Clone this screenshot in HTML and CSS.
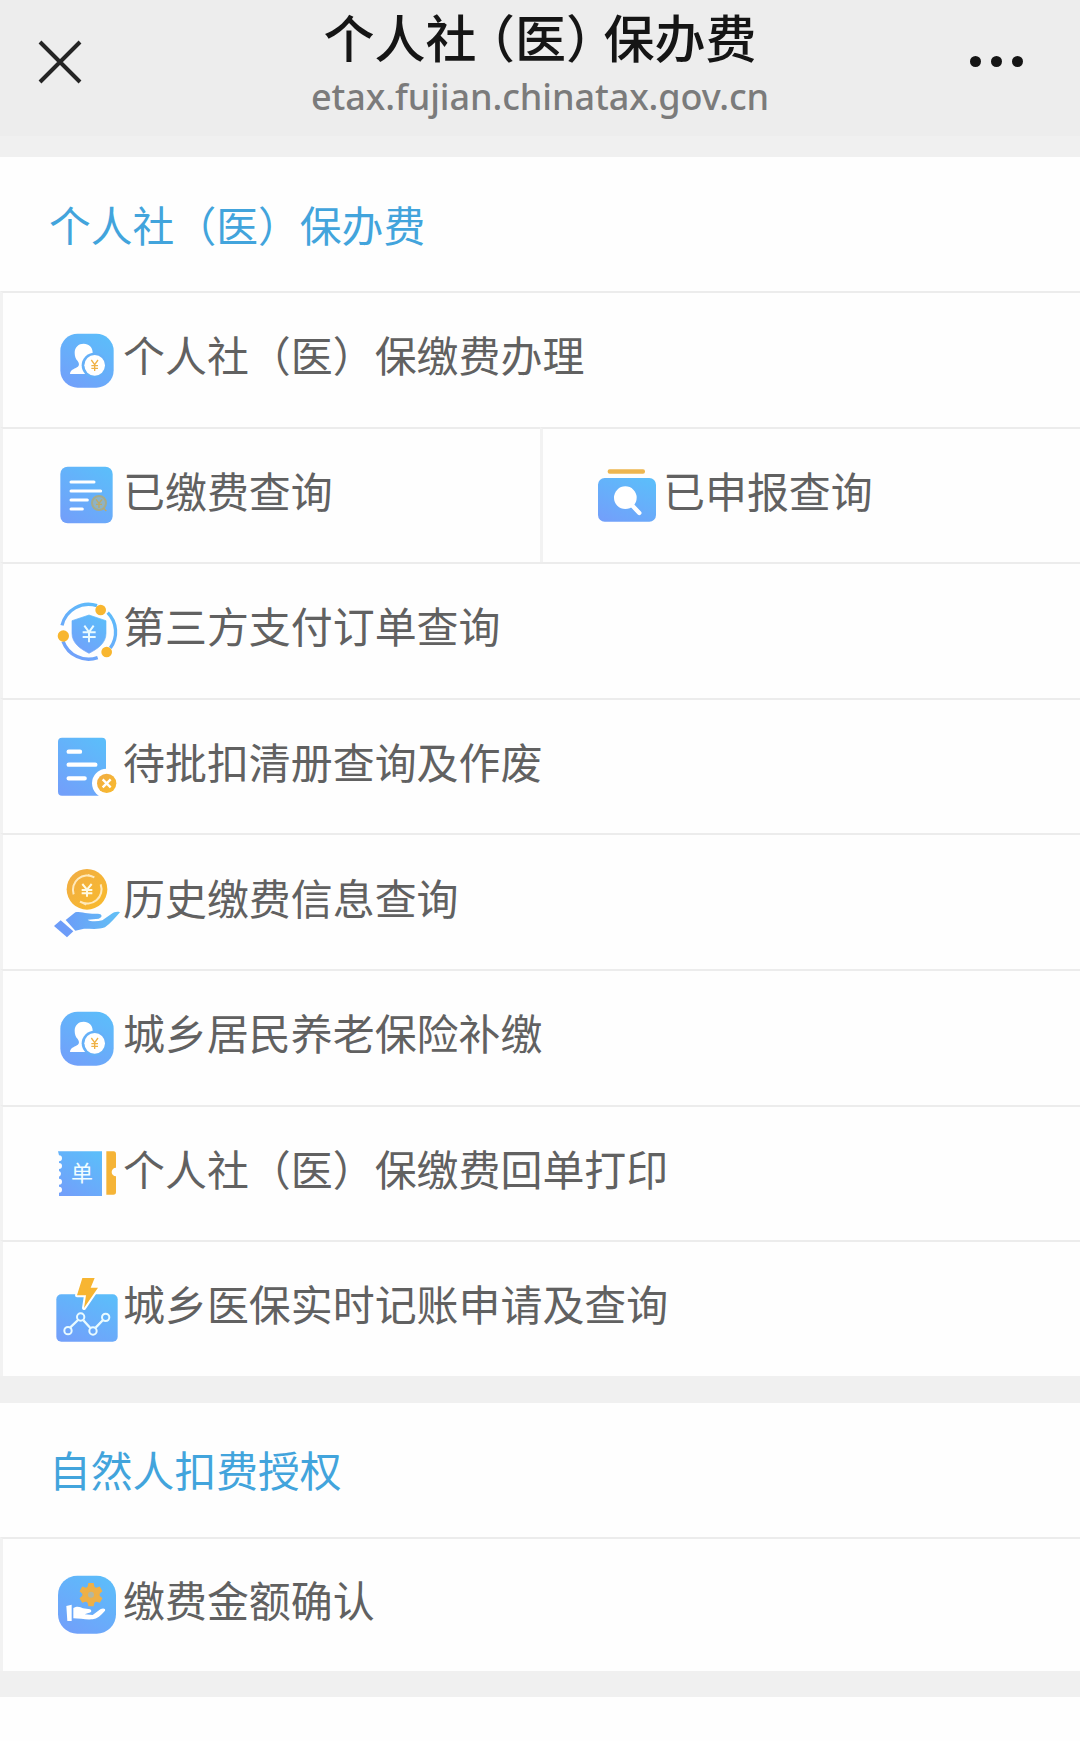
FILE: index.html
```html
<!DOCTYPE html>
<html lang="zh-CN">
<head>
<meta charset="utf-8">
<title>个人社（医）保办费</title>
<link rel="stylesheet" href="styles.css">
</head>
<body>
<svg class="defs" width="0" height="0" aria-hidden="true">
  <defs>
    <linearGradient id="blue" x1="0.8" y1="0" x2="0.2" y2="1">
      <stop offset="0" stop-color="#5cbdfa"/><stop offset="1" stop-color="#72a0fa"/>
    </linearGradient>
    <linearGradient id="gold" x1="0" y1="0" x2="1" y2="1">
      <stop offset="0" stop-color="#f0ac45"/><stop offset="1" stop-color="#f9bb2c"/>
    </linearGradient>
    <linearGradient id="palm" x1="0" y1="0" x2="1" y2="0">
      <stop offset="0" stop-color="#6b9df8"/><stop offset="1" stop-color="#62c0f5"/>
    </linearGradient>
    <symbol id="person" viewBox="42 42 198 216">
      <rect x="61" y="71" width="160" height="162" rx="52" fill="url(#blue)"/>
      <path d="M90 192C91 180 101 178 111 172C119 168 118 160 113 153C107 147 104 139 104 128C104 111 116 101 131 101C147 101 158 112 158 128C158 143 152 150 146 157V192Z" fill="#fff"/>
      <circle cx="163" cy="166" r="38" fill="#65b0f8"/>
      <circle cx="164" cy="166" r="31" fill="#fff"/>
      <path d="M154 150L164 164L174 150M164 164V183M154 167H174M154 175H174" fill="none" stroke="#efb145" stroke-width="4"/>
    </symbol>
  </defs>
</svg>

<header class="topbar">
  <svg class="close" viewBox="0 0 44 44"><path d="M2 2L42 42M42 2L2 42"/></svg>
  <div class="heading">
    <h1 class="title">个人社<span class="open">（</span>医<span class="shut">）</span>保办费</h1>
    <div class="domain">etax.fujian.chinatax.gov.cn</div>
  </div>
  <div class="more"><i></i><i></i><i></i></div>
</header>

<main>
  <section class="group">
    <h2 class="group-title">个人社（医）保办费</h2>
    <a class="item"><svg class="icon"><use href="#person"/></svg><span>个人社（医）保缴费办理</span></a>
    <div class="pair">
      <a class="item">
        <svg class="icon" viewBox="42 448 198 216">
          <rect x="61" y="471" width="157" height="170" rx="22" fill="url(#blue)"/>
          <path d="M93 517H162M93 544H182M93 571H142M93 598H127" stroke="#fff" stroke-width="9" stroke-linecap="round"/>
          <circle cx="177" cy="580" r="21" fill="#8db3c6" stroke="#a5ab8c" stroke-width="6"/>
          <path d="M168 569L177 581L186 569M177 581V595M168 584H186M190 595L199 604" fill="none" stroke="#bda967" stroke-width="4"/>
        </svg><span>已缴费查询</span>
      </a>
      <a class="item">
        <svg class="icon" viewBox="192 117 198 216">
          <rect x="233" y="148" width="112" height="13" rx="6" fill="#edb650"/>
          <rect x="204" y="174" width="174" height="131" rx="20" fill="url(#blue)"/>
          <circle cx="286" cy="233" r="34" fill="#fff"/>
          <path d="M306 256L328 279" stroke="#fff" stroke-width="13" stroke-linecap="round"/>
        </svg><span>已申报查询</span>
      </a>
    </div>
    <a class="item">
      <svg class="icon" viewBox="42 45 198 216">
        <path d="M66 136A82 82 0 0 1 171 77M203 98A82 82 0 0 1 211 204M173 233A82 82 0 0 1 69 184" fill="none" stroke="url(#blue)" stroke-width="10"/>
        <path d="M147 105L198 122V160C198 190 172 207 147 220C122 207 96 190 96 160V122Z" fill="url(#blue)" stroke="url(#blue)" stroke-width="2" stroke-linejoin="round"/>
        <path d="M133 137L147 156L161 137M147 156V187M128 157H167M128 171H167" fill="none" stroke="#e9fbff" stroke-width="6"/>
        <g fill="#f8b62f"><circle cx="182" cy="90" r="16"/><circle cx="70" cy="168" r="17"/><circle cx="200" cy="216" r="16"/></g>
      </svg><span>第三方支付订单查询</span>
    </a>
    <a class="item">
      <svg class="icon" viewBox="42 454 198 216">
        <rect x="54" y="474" width="144" height="174" rx="12" fill="url(#blue)"/>
        <path d="M86 516H120M86 555H166M86 596H134" stroke="#fff" stroke-width="13" stroke-linecap="round"/>
        <circle cx="200" cy="611" r="44" fill="#fff"/>
        <circle cx="200" cy="611" r="29" fill="url(#gold)"/>
        <path d="M188 599L212 623M212 599L188 623" stroke="#fff" stroke-width="7"/>
      </svg><span>待批扣清册查询及作废</span>
    </a>
    <a class="item">
      <svg class="icon" viewBox="42 48 198 216">
        <circle cx="141" cy="118" r="61" fill="url(#gold)"/>
        <path d="M101 133A43 43 0 0 1 163 82M182 103A43 43 0 0 1 120 155M120 155L139 164M163 82L144 75" fill="none" stroke="#ffe9bb" stroke-width="6"/>
        <path d="M127 102L141 119L155 102M141 119V140M125 120H157M125 130H157" fill="none" stroke="#fffbe4" stroke-width="6"/>
        <path d="M77 210L106 187C118 184 130 188 142 190C157 193 170 189 181 193C188 197 184 204 176 206L143 209C149 215 171 215 187 211L214 192C222 186 232 184 240 187C226 203 212 221 195 232C178 239 153 236 132 236L106 242Z" fill="url(#palm)"/>
        <path d="M62 211L100 244L81 262L42 228Z" fill="#6d9cf8"/>
      </svg><span>历史缴费信息查询</span>
    </a>
    <a class="item"><svg class="icon"><use href="#person"/></svg><span>城乡居民养老保险补缴</span></a>
    <a class="item">
      <svg class="icon" viewBox="42 53 198 216">
        <path d="M54 96H186V230H57V220A9 9 0 0 0 57 202V196A9 9 0 0 0 57 178V172A9 9 0 0 0 57 155V149A9 9 0 0 0 57 131V126A9 9 0 0 0 57 108Z" fill="url(#blue)"/>
        <path d="M199 96H221Q228 96 228 105V145A13 13 0 0 0 228 171V218Q228 226 220 226H199Z" fill="#f5b437"/>
        <text class="ticket-mark" x="126" y="185" text-anchor="middle">单</text>
      </svg><span>个人社（医）保缴费回单打印</span>
    </a>
    <a class="item">
      <svg class="icon" viewBox="42 459 198 216">
        <rect x="49" y="523" width="184" height="142" rx="15" fill="url(#blue)"/>
        <path d="M127 474H164L152 503H174L132 564L138 526H111Z" fill="#f7b532" stroke="#fff" stroke-width="12" stroke-linejoin="round" paint-order="stroke"/>
        <path d="M91 622L114 600M130 601L151 624M167 623L189 600" stroke="#e9fbff" stroke-width="7"/>
        <g fill="none" stroke="#e9fbff" stroke-width="6"><circle cx="84" cy="632" r="11"/><circle cx="122" cy="591" r="11"/><circle cx="159" cy="633" r="11"/><circle cx="197" cy="592" r="11"/></g>
      </svg><span>城乡医保实时记账申请及查询</span>
    </a>
  </section>

  <section class="group auth">
    <h2 class="group-title">自然人扣费授权</h2>
    <a class="item">
      <svg class="icon" viewBox="162 628 198 216">
        <rect x="174" y="648" width="174" height="174" rx="58" fill="url(#blue)"/>
        <g fill="#eeb047"><circle cx="273" cy="705" r="26"/>
          <path id="tooth" d="M265 670H281L285 690H261ZM265 740H281L285 720H261Z"/>
          <use href="#tooth" transform="rotate(60 273 705)"/><use href="#tooth" transform="rotate(120 273 705)"/></g>
        <circle cx="273" cy="705" r="9" fill="#b4b7a0"/>
        <path d="M199 739L215 735V784H202ZM220 745C232 738 241 742 249 746L270 749C277 753 274 760 265 760L254 764L278 766L301 749C309 744 318 747 315 753C303 768 291 777 278 779C258 781 239 776 220 776Z" fill="#fff"/>
      </svg><span>缴费金额确认</span>
    </a>
  </section>
</main>
</body>
</html>
```

FILE: styles.css
```css
* { box-sizing: border-box; }

body {
  margin: 0;
  min-height: 1741px;
  background: #fefefe;
  color: #616161;
  font-family: "Noto Sans CJK SC", sans-serif;
}

.defs { display: block; height: 0; }

.topbar {
  display: grid;
  grid-template-columns: 200px 1fr 200px;
  height: 136px;
  background: #ededed;
}

.close {
  width: 44px;
  height: 44px;
  margin: 40px 0 0 38px;
  fill: none;
  stroke: #242424;
  stroke-width: 4;
}

.heading { text-align: center; white-space: nowrap; }

.title {
  margin: 0;
  color: #151515;
  font-size: 51px;
  font-weight: 500;
  line-height: 73px;
}

/* half-width brackets */
.open, .shut { font-feature-settings: "halt"; }
.open { margin-left: 13px; }
.shut { margin-right: 12px; }

.domain {
  margin-top: 2px;
  color: #7b7b7b;
  font-family: "Noto Sans", sans-serif;
  font-size: 36px;
  font-weight: 500;
  letter-spacing: -0.08px;
  line-height: 44px;
}

.more {
  display: flex;
  gap: 10px;
  justify-content: flex-end;
  padding: 56px 57px 0 0;
}

.more i {
  width: 11px;
  height: 11px;
  border-radius: 50%;
  background: #151515;
}

.group { border-top: 21px solid #f0f0f0; }
.auth { border-top-width: 27px; border-bottom: 26px solid #f0f0f0; }

.group-title {
  height: 134px;
  margin: 0;
  padding-left: 49px;
  color: #42a4dc;
  font-size: 41.8px;
  font-weight: 400;
  line-height: 134px;
}

.auth .group-title { line-height: 132px; }

.item {
  display: flex;
  gap: 3px;
  align-items: center;
  height: 135.6px;
  padding-left: 51px;
  border-top: 2px solid #ececec;
  border-left: 3px solid #f2f2f2;
  font-size: 41.95px;
  line-height: 60px;
  white-space: nowrap;
}

.item span { padding-bottom: 11px; }
.auth .item { height: 134px; }

.pair { display: grid; grid-template-columns: 1fr 1fr; }

.icon { flex: none; width: 66px; height: 72px; }

.ticket-mark { fill: #f0fdff; font-size: 66px; }
```
